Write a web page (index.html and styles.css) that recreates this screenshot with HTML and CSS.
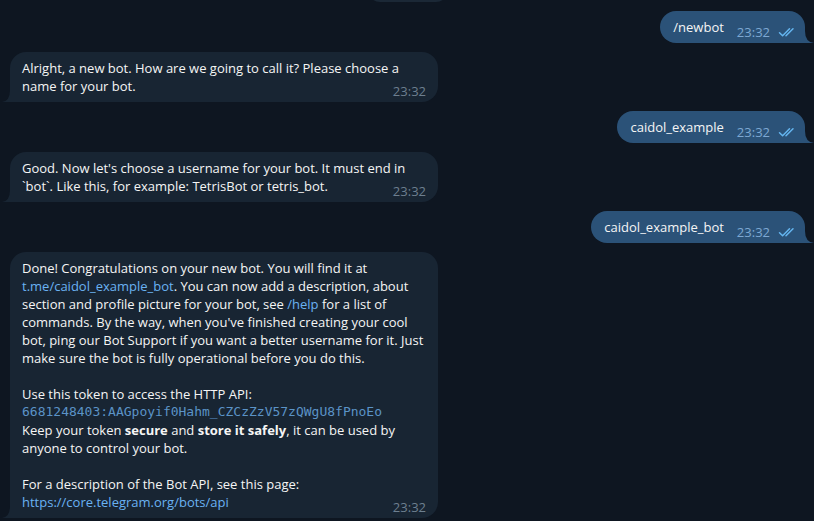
FILE: index.html
```html
<!DOCTYPE html>
<html>
<head>
<meta charset="utf-8">
<link rel="stylesheet" href="styles.css">
</head>
<body>
<div class="chat">
  <div class="date"></div>

  <div class="bubble out">
    <span class="text">/newbot</span>
    <span class="meta"><span class="time">23:32</span><svg class="check" width="18" height="11" viewBox="0 0 18 11"><path d="M1.5 5.8 L4.6 8.8 L11.5 1.8 M8 8.8 L15 1.8" fill="none" stroke="#64b5ef" stroke-width="1.5" stroke-linecap="round" stroke-linejoin="round"/></svg></span>
    <svg class="tail tail-out" width="9" height="12" viewBox="0 0 9 12"><path d="M0 0 Q0 11 9 12 L0 12 Z" fill="#2b5278"/></svg>
  </div>

  <div class="bubble in">
    <div class="text">Alright, a new bot. How are we going to call it? Please choose a<br>name for your bot.</div>
    <span class="time in-time">23:32</span>
    <svg class="tail tail-in" width="8" height="12" viewBox="0 0 8 12"><path d="M8 0 Q8 11 0 12 L8 12 Z" fill="#182533"/></svg>
  </div>

  <div class="bubble out">
    <span class="text">caidol_example</span>
    <span class="meta"><span class="time">23:32</span><svg class="check" width="18" height="11" viewBox="0 0 18 11"><path d="M1.5 5.8 L4.6 8.8 L11.5 1.8 M8 8.8 L15 1.8" fill="none" stroke="#64b5ef" stroke-width="1.5" stroke-linecap="round" stroke-linejoin="round"/></svg></span>
    <svg class="tail tail-out" width="9" height="12" viewBox="0 0 9 12"><path d="M0 0 Q0 11 9 12 L0 12 Z" fill="#2b5278"/></svg>
  </div>

  <div class="bubble in">
    <div class="text">Good. Now let's choose a username for your bot. It must end in<br>`bot`. Like this, for example: TetrisBot or tetris_bot.</div>
    <span class="time in-time">23:32</span>
    <svg class="tail tail-in" width="8" height="12" viewBox="0 0 8 12"><path d="M8 0 Q8 11 0 12 L8 12 Z" fill="#182533"/></svg>
  </div>

  <div class="bubble out">
    <span class="text">caidol_example_bot</span>
    <span class="meta"><span class="time">23:32</span><svg class="check" width="18" height="11" viewBox="0 0 18 11"><path d="M1.5 5.8 L4.6 8.8 L11.5 1.8 M8 8.8 L15 1.8" fill="none" stroke="#64b5ef" stroke-width="1.5" stroke-linecap="round" stroke-linejoin="round"/></svg></span>
    <svg class="tail tail-out" width="9" height="12" viewBox="0 0 9 12"><path d="M0 0 Q0 11 9 12 L0 12 Z" fill="#2b5278"/></svg>
  </div>

  <div class="bubble in">
    <div class="text">Done! Congratulations on your new bot. You will find it at<br><a class="link">t.me/caidol_example_bot</a>. You can now add a description, about<br>section and profile picture for your bot, see <a class="link">/help</a> for a list of<br>commands. By the way, when you've finished creating your cool<br>bot, ping our Bot Support if you want a better username for it. Just<br>make sure the bot is fully operational before you do this.<br><br>Use this token to access the HTTP API:<br><code class="token">6681248403:AAGpoyif0Hahm_CZCzZzV57zQWgU8fPnoEo</code><br>Keep your token <b>secure</b> and <b>store it safely</b>, it can be used by<br>anyone to control your bot.<br><br>For a description of the Bot API, see this page:<br><a class="link">https://core.telegram.org/bots/api</a></div>
    <span class="time in-time">23:32</span>
    <svg class="tail tail-in" width="8" height="12" viewBox="0 0 8 12"><path d="M8 0 Q8 11 0 12 L8 12 Z" fill="#182533"/></svg>
  </div>
</div>
</body>
</html>
```
FILE: styles.css
```css
html, body {
  margin: 0;
  padding: 0;
  background: #0e1621;
  height: 100%;
  overflow: hidden;
}

body {
  font-family: "Open Sans", "Noto Sans", sans-serif;
  font-size: 13px;
  color: #f5f5f5;
}

.chat {
  display: flex;
  flex-direction: column;
  gap: 9px;
  padding: 0 9px 0 10px;
}

.date {
  align-self: center;
  width: 80px;
  height: 24px;
  margin-top: -22px;
  border-radius: 12px;
  background: #1b2836;
}

.bubble {
  position: relative;
  line-height: 18px;
}

.bubble.out {
  align-self: flex-end;
  display: flex;
  align-items: flex-end;
  gap: 13px;
  background: #2b5278;
  border-radius: 16px 16px 0 16px;
  padding: 7px 9px 7px 13px;
}

.bubble.in {
  align-self: flex-start;
  width: 428px;
  box-sizing: border-box;
  background: #182533;
  border-radius: 16px 16px 16px 0;
  padding: 7px 12px;
}

.text {
  white-space: nowrap;
}

.meta {
  display: flex;
  align-items: center;
  gap: 8px;
  margin-bottom: -4px;
  line-height: 16px;
}

.time {
  font-size: 13px;
  line-height: 16px;
  color: #7da8d3;
}

.in-time {
  position: absolute;
  right: 12px;
  bottom: 3px;
  color: #6d7f8f;
}

.check {
  display: block;
}

.tail {
  position: absolute;
  bottom: 0;
}

.tail-out {
  right: -9px;
}

.tail-in {
  left: -8px;
}

.link {
  color: #6ab2f2;
}

.token {
  font-family: "DejaVu Sans Mono", monospace;
  font-size: 13px;
  line-height: 18px;
  vertical-align: top;
  color: #5b93c7;
}

b {
  font-weight: 700;
}
```
